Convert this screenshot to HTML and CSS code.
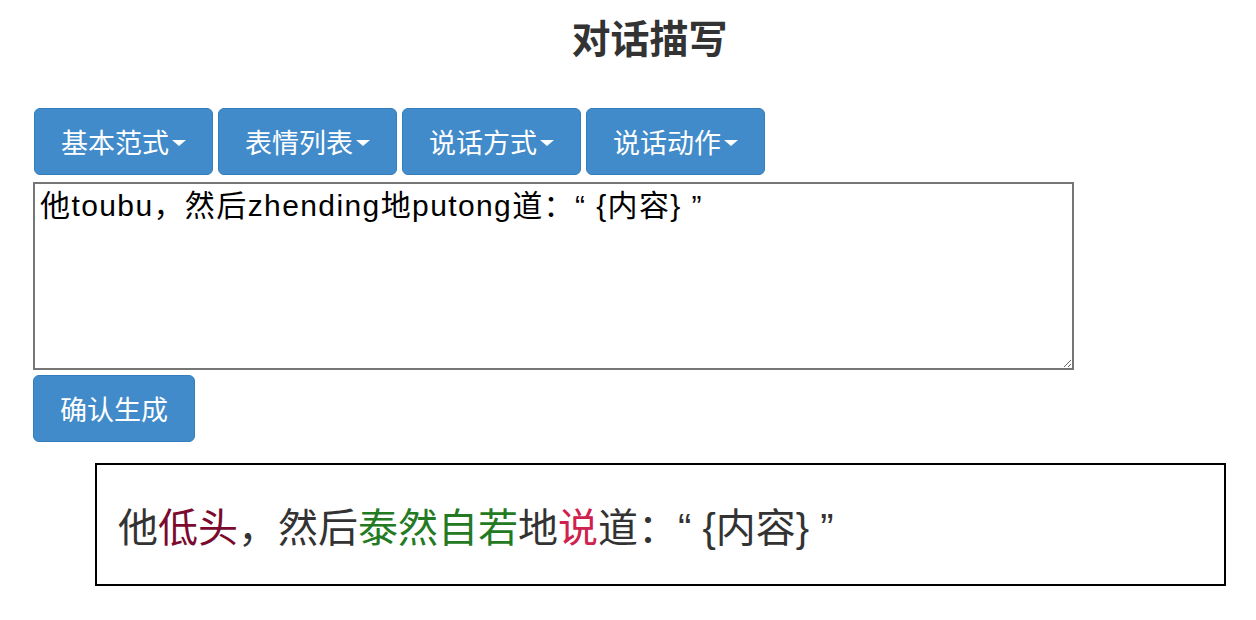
FILE: index.html
```html
<!DOCTYPE html>
<html lang="zh-CN">
<head>
<meta charset="utf-8">
<title>对话描写</title>
<link rel="stylesheet" href="styles.css">
</head>
<body>
<div class="page">
  <h1 class="title">对话描写</h1>
  <div class="toolbar">
    <button class="btn">基本范式<span class="caret"></span></button>
    <button class="btn">表情列表<span class="caret"></span></button>
    <button class="btn">说话方式<span class="caret"></span></button>
    <button class="btn">说话动作<span class="caret"></span></button>
  </div>
  <textarea class="editor">他toubu，然后zhending地putong道：“ {内容} ”</textarea>
  <div class="actions">
    <button class="btn">确认生成</button>
  </div>
  <div class="result">他<span class="c-expr">低头</span>，然后<span class="c-way">泰然自若</span>地<span class="c-act">说</span>道：“ {内容} ”</div>
</div>
</body>
</html>
```
FILE: styles.css
```css
* { box-sizing: border-box; }
html, body { margin: 0; padding: 0; background: #fff; }
body {
  font-family: "Liberation Sans", "Noto Sans CJK SC", sans-serif;
  color: #333;
}
.page {
  padding: 16px 0 0 33px;
  width: 1256px;
}
.title {
  margin: 0;
  font-size: 39px;
  line-height: 48px;
  font-weight: bold;
  text-align: center;
  padding-left: 10px;
  color: #333;
}
.toolbar {
  display: flex;
  gap: 5px;
  margin-top: 44px;
  padding-left: 1px;
}
.btn {
  display: inline-flex;
  align-items: center;
  height: 67px;
  padding: 0 26px;
  font-family: "Liberation Sans", "Noto Sans CJK SC", sans-serif;
  font-size: 27px;
  color: #fff;
  background: #428bca;
  border: 1px solid #357ebd;
  border-radius: 6px;
  cursor: pointer;
}
.caret {
  display: inline-block;
  width: 0;
  height: 0;
  margin-left: 3px;
  margin-top: 3px;
  border-top: 6px solid #fff;
  border-left: 7px solid transparent;
  border-right: 7px solid transparent;
}
.editor {
  display: block;
  margin-top: 7px;
  width: 1041px;
  height: 188px;
  border: 2px solid #767676;
  padding: 4px 5px;
  font-family: "Liberation Sans", "Noto Sans CJK SC", sans-serif;
  font-size: 30px;
  line-height: 36px;
  letter-spacing: 1.4px;
  color: #000;
  resize: both;
  outline: none;
}
.actions {
  margin-top: 5px;
  display: flex;
}
.result {
  margin: 21px 0 0 62px;
  width: 1131px;
  height: 123px;
  border: 2px solid #000;
  padding: 0 0 0 21px;
  display: flex;
  align-items: center;
  font-size: 40px;
  color: #333;
}
.c-expr { color: #7b0a2e; }
.c-way { color: #237a23; }
.c-act { color: #d0214e; }
```
